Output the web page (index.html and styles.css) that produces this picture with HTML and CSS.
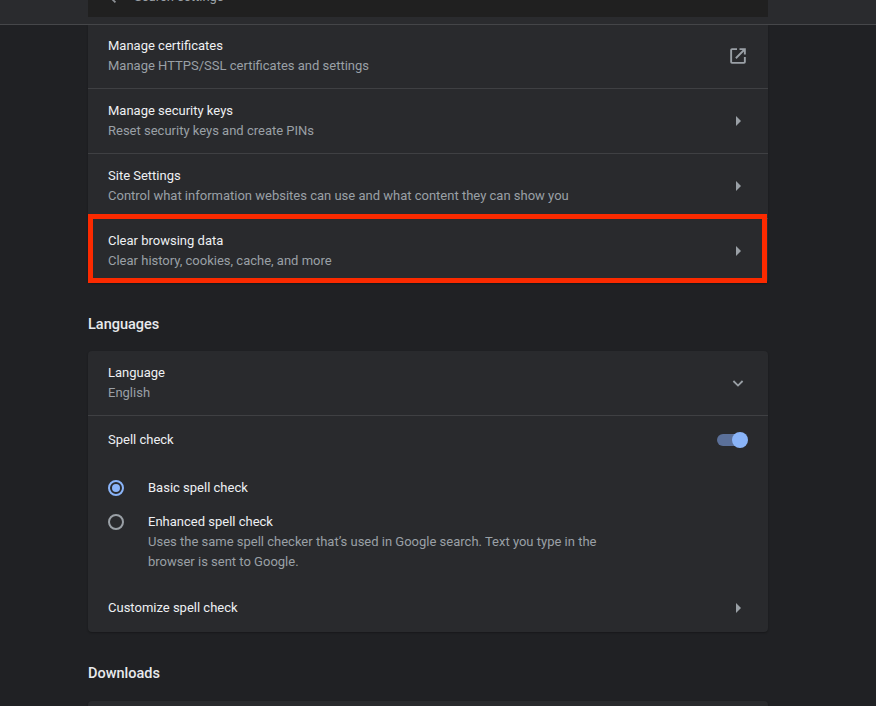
FILE: index.html
```html
<!DOCTYPE html>
<html lang="en">
<head>
<meta charset="utf-8">
<title>Settings</title>
<link rel="stylesheet" href="styles.css">
</head>
<body>
<header class="topbar">
  <div class="search">
    <svg class="search-icon" width="20" height="20" viewBox="0 0 24 24"><path d="M15.5 14h-.79l-.28-.27A6.47 6.47 0 0 0 16 9.5 6.5 6.5 0 1 0 9.5 16c1.61 0 3.09-.59 4.23-1.57l.27.28v.79l5 4.99L20.49 19l-4.99-5zm-6 0C7.01 14 5 11.99 5 9.5S7.01 5 9.5 5 14 7.01 14 9.5 11.99 14 9.5 14z"/></svg>
    <span class="search-text">Search settings</span>
  </div>
</header>
<main class="content">
  <section class="card card-top">
    <div class="row row-first">
      <div class="text"><div class="title">Manage certificates</div><div class="sub">Manage HTTPS/SSL certificates and settings</div></div>
      <svg class="icon-ext" width="20" height="20" viewBox="0 0 20 20"><path d="M4 2.200h5v1.900H4.100v11.800h11.800V11h1.900v5a1.800 1.800 0 0 1-1.800 1.800H4A1.800 1.800 0 0 1 2.200 16V4A1.800 1.800 0 0 1 4 2.200zM11.500 2.200h6.300v6.300h-1.900V5.500l-7.400 7.400-1.300-1.300 7.400-7.500h-3.100z"/></svg>
    </div>
    <div class="row">
      <div class="text"><div class="title">Manage security keys</div><div class="sub">Reset security keys and create PINs</div></div>
      <span class="arrow"></span>
    </div>
    <div class="row">
      <div class="text"><div class="title">Site Settings</div><div class="sub">Control what information websites can use and what content they can show you</div></div>
      <span class="arrow"></span>
    </div>
    <div class="row">
      <div class="text"><div class="title">Clear browsing data</div><div class="sub">Clear history, cookies, cache, and more</div></div>
      <span class="arrow"></span>
      <div class="highlight"></div>
    </div>
  </section>

  <h2 class="heading">Languages</h2>
  <section class="card">
    <div class="row row-lang">
      <div class="text"><div class="title">Language</div><div class="sub">English</div></div>
      <svg class="chevron" width="12" height="8" viewBox="0 0 12 8"><path d="M1.400 1 6 5.600 10.600 1" fill="none" stroke-width="1.800"/></svg>
    </div>
    <div class="row row-toggle">
      <div class="title">Spell check</div>
      <span class="toggle"><span class="knob"></span></span>
    </div>
    <div class="radio-row radio-basic">
      <span class="radio radio-on"></span>
      <div class="title">Basic spell check</div>
    </div>
    <div class="radio-row radio-enhanced">
      <span class="radio"></span>
      <div class="text"><div class="title">Enhanced spell check</div><div class="sub sub-wrap">Uses the same spell checker that’s used in Google search. Text you type in the browser is sent to Google.</div></div>
    </div>
    <div class="row-plain">
      <div class="title">Customize spell check</div>
      <span class="arrow"></span>
    </div>
  </section>

  <h2 class="heading heading-dl">Downloads</h2>
  <section class="card card-next"></section>
</main>
</body>
</html>
```

FILE: styles.css
```css
* { box-sizing: border-box; }
html, body { margin: 0; height: 100%; overflow: hidden; }
body {
  background: #202124;
  color: #e8eaed;
  font-family: Roboto, "Liberation Sans", sans-serif;
  font-size: 13px;
  width: 876px;
  height: 706px;
}
.topbar {
  height: 25px;
  background: #2a2b2e;
  border-bottom: 1px solid #46474a;
  padding-left: 88px;
  display: flex;
  align-items: flex-start;
}
.search {
  width: 680px;
  height: 17px;
  background: #202020;
  display: flex;
  align-items: flex-end;
  overflow: hidden;
  color: #9aa0a6;
}
.search-icon { fill: #8e9297; flex: none; margin-left: 11px; margin-bottom: 11px; }
.search-text { margin-left: 15px; line-height: 16px; margin-bottom: 12px; }
.content { width: 680px; margin-left: 88px; }
.card {
  background: #292a2d;
  border-radius: 4px;
  box-shadow: 0 1px 2px rgba(0,0,0,.3);
}
.card-top { border-radius: 0 0 4px 4px; }
.row {
  position: relative;
  height: 65px;
  padding: 0 20px;
  display: flex;
  align-items: center;
  justify-content: space-between;
  border-top: 1px solid #3f4043;
}
.row-first { border-top: 0; height: 63px; padding-bottom: 2px; }
.row-lang { border-top: 0; height: 64px; }
.text { display: flex; flex-direction: column; }
.title { color: #eef0f3; line-height: 20px; font-weight: 400; }
.sub { color: #9aa0a6; line-height: 20px; }
.sub-wrap { width: 480px; }
.arrow {
  width: 0; height: 0;
  margin-right: 7px;
  border-left: 5px solid #9aa0a6;
  border-top: 5px solid transparent;
  border-bottom: 5px solid transparent;
  flex: none;
}
.icon-ext { fill: #9aa0a6; flex: none; }
.chevron { stroke: #9aa0a6; flex: none; margin-right: 4px; margin-top: 2px; }
.highlight {
  position: absolute;
  left: 0; top: -5px; right: 1px; bottom: 0;
  border: 5px solid #fb2a00;
  pointer-events: none;
}
.heading {
  margin: 0;
  font-size: 14.500px;
  font-weight: 500;
  line-height: 20px;
  color: #e8eaed;
  padding-top: 32px;
  padding-bottom: 16px;
}
.heading-dl { padding-top: 32px; padding-bottom: 17px; }
.row-toggle { height: 48px; }
.toggle {
  position: relative;
  width: 30px; height: 12px;
  margin-right: 1px;
  border-radius: 6px;
  background: #5b7099;
  flex: none;
}
.knob {
  position: absolute;
  right: -1px; top: -2px;
  width: 16px; height: 16px;
  border-radius: 50%;
  background: #8ab4f8;
}
.radio-row { display: flex; padding-left: 20px; }
.radio-basic { height: 34px; align-items: center; margin-top: 8px; }
.radio-enhanced { align-items: flex-start; padding-top: 7px; }
.radio {
  width: 16px; height: 16px;
  border: 2px solid #9aa0a6;
  border-radius: 50%;
  margin-right: 24px;
  flex: none;
  position: relative;
  margin-top: 2px;
}
.radio-basic .radio { margin-top: 0; }
.radio-on { border-color: #8ab4f8; }
.radio-on::after {
  content: "";
  position: absolute;
  left: 2px; top: 2px;
  width: 8px; height: 8px;
  border-radius: 50%;
  background: #8ab4f8;
}
.row-plain {
  height: 48px;
  margin-top: 12px;
  padding: 0 20px;
  display: flex;
  align-items: center;
  justify-content: space-between;
}
.card-next { height: 60px; }
```
